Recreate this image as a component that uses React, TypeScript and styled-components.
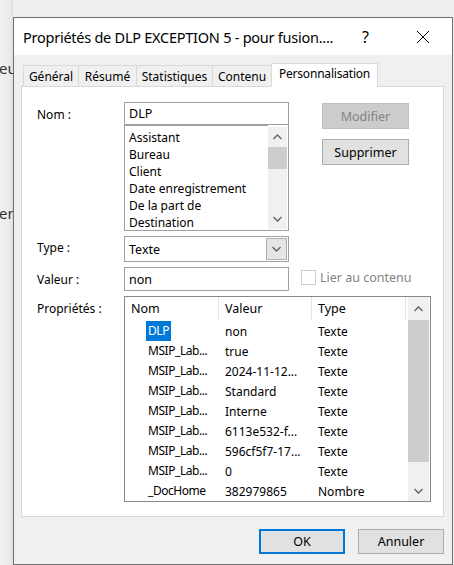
import styled, { createGlobalStyle } from 'styled-components'

const GlobalStyle = createGlobalStyle`
  html, body {
    margin: 0;
    padding: 0;
    background: #efefef;
    font-family: 'Noto Sans', 'Open Sans', sans-serif;
    font-size: 12px;
    color: #000;
  }
`

const nameItems = ['Assistant', 'Bureau', 'Client', 'Date enregistrement', 'De la part de', 'Destination']

const props = [
  { name: 'DLP', value: 'non', type: 'Texte', selected: true },
  { name: 'MSIP_Lab...', value: 'true', type: 'Texte' },
  { name: 'MSIP_Lab...', value: '2024-11-12...', type: 'Texte' },
  { name: 'MSIP_Lab...', value: 'Standard', type: 'Texte' },
  { name: 'MSIP_Lab...', value: 'Interne', type: 'Texte' },
  { name: 'MSIP_Lab...', value: '6113e532-f...', type: 'Texte' },
  { name: 'MSIP_Lab...', value: '596cf5f7-17...', type: 'Texte' },
  { name: 'MSIP_Lab...', value: '0', type: 'Texte' },
  { name: '_DocHome', value: '382979865', type: 'Nombre' },
]

const tabs = [
  { label: 'Général', width: 56 },
  { label: 'Résumé', width: 59 },
  { label: 'Statistiques', width: 77 },
  { label: 'Contenu', width: 60 },
  { label: 'Personnalisation', width: 107, active: true },
]

const Chevron = ({ up }: { up?: boolean }) => (
  <svg width="9" height="6" viewBox="0 0 9 6">
    <path
      d={up ? 'M0.5 5 L4.5 1 L8.5 5' : 'M0.5 1 L4.5 5 L8.5 1'}
      fill="none"
      stroke="#606060"
      strokeWidth="1.3"
    />
  </svg>
)

export default function App() {
  return (
    <>
      <GlobalStyle />
      <Desktop>
        <BackStrip>
          <BackText $top={59}>eu</BackText>
          <BackText $top={127}>en</BackText>
        </BackStrip>
        <Dialog>
          <TitleBar>
            <Title>Propriétés de DLP EXCEPTION 5 - pour fusion....</Title>
            <HelpGlyph>?</HelpGlyph>
            <CloseIcon width="14" height="14" viewBox="0 0 14 14">
              <path d="M1 1 L13 13 M13 1 L1 13" stroke="#000" strokeWidth="1" />
            </CloseIcon>
          </TitleBar>
          <Body>
            <TabRow>
              {tabs.map((t) => (
                <Tab key={t.label} $active={t.active} $w={t.width}>
                  {t.label}
                </Tab>
              ))}
            </TabRow>
            <Panel>
              <FormGrid>
                <Label $top={6}>Nom :</Label>
                <NameCol>
                  <TextInput>DLP</TextInput>
                  <NameList>
                    <NameItems>
                      {nameItems.map((n) => (
                        <NameItem key={n}>{n}</NameItem>
                      ))}
                    </NameItems>
                    <VScroll>
                      <ArrowBox $h={20}>
                        <Chevron up />
                      </ArrowBox>
                      <Thumb $h={22} />
                      <Spacer />
                      <ArrowBox $h={20}>
                        <Chevron />
                      </ArrowBox>
                    </VScroll>
                  </NameList>
                </NameCol>
                <ButtonCol>
                  <SideButton disabled>Modifier</SideButton>
                  <SideButton>Supprimer</SideButton>
                </ButtonCol>

                <Label $top={5}>Type :</Label>
                <Combo>
                  <span>Texte</span>
                  <ComboButton>
                    <Chevron />
                  </ComboButton>
                </Combo>
                <div />

                <Label $top={6}>Valeur :</Label>
                <ValueInput>non</ValueInput>
                <CheckRow>
                  <CheckBox />
                  <span>Lier au contenu</span>
                </CheckRow>

                <Label $top={6}>Propriétés :</Label>
                <ListView>
                  <ListMain>
                    <HeaderRow>
                      <HeaderCell>Nom</HeaderCell>
                      <HeaderCell>Valeur</HeaderCell>
                      <HeaderCell>Type</HeaderCell>
                    </HeaderRow>
                    {props.map((p, i) => (
                      <PropRow key={i}>
                        <NameCell>
                          <NameText $selected={p.selected}>{p.name}</NameText>
                        </NameCell>
                        <Cell>{p.value}</Cell>
                        <Cell>{p.type}</Cell>
                      </PropRow>
                    ))}
                  </ListMain>
                  <VScroll $wide>
                    <ArrowBox $h={23}>
                      <Chevron up />
                    </ArrowBox>
                    <Thumb $h={142} />
                    <Spacer />
                    <ArrowBox $h={20}>
                      <Chevron />
                    </ArrowBox>
                  </VScroll>
                </ListView>
              </FormGrid>
            </Panel>
            <Footer>
              <DialogButton $default>OK</DialogButton>
              <DialogButton>Annuler</DialogButton>
            </Footer>
          </Body>
        </Dialog>
      </Desktop>
    </>
  )
}

const Desktop = styled.div`
  display: flex;
  height: 565px;
  overflow: hidden;
  background: #efefef;
`

const BackStrip = styled.div`
  width: 13px;
  flex-shrink: 0;
  display: flex;
  flex-direction: column;
  overflow: hidden;
  font-size: 15px;
  color: #333;
  background: linear-gradient(to right, #f0f0f0 0%, #ebebeb 70%, #e0e0e0 100%);
`

const BackText = styled.span<{ $top: number }>`
  margin-top: ${(p) => p.$top}px;
  line-height: 18px;
  white-space: nowrap;
  margin-left: -1px;
`

const Dialog = styled.div`
  margin-top: 17px;
  width: 440px;
  height: 548px;
  box-sizing: border-box;
  border: 1px solid #707070;
  display: flex;
  flex-direction: column;
  background: #f0f0f0;
  flex-shrink: 0;
`

const TitleBar = styled.div`
  height: 37px;
  background: #fff;
  display: flex;
  align-items: center;
  padding-left: 9px;
  flex-shrink: 0;
`

const Title = styled.div`
  font-size: 14.5px;
  flex: 1;
  white-space: nowrap;
  letter-spacing: -0.25px;
`

const HelpGlyph = styled.span`
  font-size: 16px;
  width: 14px;
  margin-right: 40px;
`

const CloseIcon = styled.svg`
  margin-right: 22px;
`

const Body = styled.div`
  flex: 1;
  display: flex;
  flex-direction: column;
  padding: 8px 8px 0 7px;
`

const TabRow = styled.div`
  display: flex;
  align-items: flex-end;
  height: 23px;
  padding-left: 3px;
  position: relative;
  z-index: 1;
`

const Tab = styled.div<{ $active?: boolean; $w: number }>`
  width: ${(p) => p.$w}px;
  height: ${(p) => (p.$active ? 24 : 21)}px;
  box-sizing: border-box;
  display: flex;
  align-items: center;
  justify-content: center;
  background: ${(p) => (p.$active ? '#fff' : '#f0f0f0')};
  border: 1px solid #d9d9d9;
  border-bottom: ${(p) => (p.$active ? '1px solid #fff' : '0')};
  margin-left: -1px;
  margin-bottom: ${(p) => (p.$active ? -1 : 0)}px;
  padding-bottom: ${(p) => (p.$active ? 3 : 0)}px;
  white-space: nowrap;
  letter-spacing: ${(p) => (p.$active ? '-0.2px' : '0')};
`

const Panel = styled.div`
  height: 431px;
  box-sizing: border-box;
  background: #fff;
  border: 1px solid #d9d9d9;
  padding: 15px 0 0 15px;
`

const FormGrid = styled.div`
  display: grid;
  grid-template-columns: 87px 165px 1fr;
  row-gap: 5px;
  align-items: start;
`

const Label = styled.div<{ $top: number }>`
  padding-top: ${(p) => p.$top}px;
  line-height: 14px;
`

const NameCol = styled.div`
  display: flex;
  flex-direction: column;
`

const boxBorder = '#a0a0a0'

const TextInput = styled.div`
  height: 23px;
  box-sizing: border-box;
  border: 1px solid ${boxBorder};
  padding: 0 4px;
  display: flex;
  align-items: center;
  font-size: 12.5px;
`

const NameList = styled.div`
  height: 106px;
  box-sizing: border-box;
  border: 1px solid ${boxBorder};
  border-top: 0;
  display: flex;
  overflow: hidden;
`

const NameItems = styled.div`
  flex: 1;
  padding: 3px 0 0 4px;
  border-top: 1px solid ${boxBorder};
`

const NameItem = styled.div`
  line-height: 17px;
  white-space: nowrap;
`

const VScroll = styled.div<{ $wide?: boolean }>`
  width: ${(p) => (p.$wide ? 21 : 19)}px;
  flex-shrink: 0;
  background: #f0f0f0;
  display: flex;
  flex-direction: column;
  margin: ${(p) => (p.$wide ? '0 1px 0 0' : '2px 1px 1px 0')};
`

const ArrowBox = styled.div<{ $h: number }>`
  height: ${(p) => p.$h}px;
  display: flex;
  align-items: center;
  justify-content: center;
  flex-shrink: 0;
`

const Thumb = styled.div<{ $h: number }>`
  height: ${(p) => p.$h}px;
  background: #cdcdcd;
  flex-shrink: 0;
`

const Spacer = styled.div`
  flex: 1;
`

const ButtonCol = styled.div`
  display: flex;
  flex-direction: column;
  gap: 10px;
  padding-left: 33px;
  padding-top: 1px;
`

const SideButton = styled.div<{ disabled?: boolean }>`
  width: 87px;
  height: 26px;
  box-sizing: border-box;
  display: flex;
  align-items: center;
  justify-content: center;
  font-size: 12.5px;
  background: ${(p) => (p.disabled ? '#cccccc' : '#e1e1e1')};
  border: 1px solid ${(p) => (p.disabled ? '#bfbfbf' : '#adadad')};
  color: ${(p) => (p.disabled ? '#838383' : '#000')};
`

const Combo = styled.div`
  height: 26px;
  box-sizing: border-box;
  border: 1px solid ${boxBorder};
  display: flex;
  align-items: center;
  padding-left: 4px;
  font-size: 12.5px;

  span {
    flex: 1;
  }
`

const ComboButton = styled.div`
  width: 19px;
  height: 20px;
  margin-right: 1px;
  background: #e5e5e5;
  border: 1px solid #adadad;
  display: flex;
  align-items: center;
  justify-content: center;
`

const ValueInput = styled(TextInput)`
  height: 24px;
`

const CheckRow = styled.div`
  display: flex;
  align-items: center;
  gap: 4px;
  padding-left: 12px;
  padding-top: 2px;
  color: #838383;
  font-size: 12.5px;
`

const CheckBox = styled.div`
  width: 15px;
  height: 15px;
  box-sizing: border-box;
  border: 1px solid #cccccc;
  background: #fff;
`

const ListView = styled.div`
  grid-column: 2 / 4;
  width: 307px;
  height: 206px;
  box-sizing: border-box;
  border: 1px solid #828790;
  display: flex;
  overflow: hidden;
`

const ListMain = styled.div`
  flex: 1;
  display: flex;
  flex-direction: column;
`

const columns = '94px 93px 94px'

const HeaderRow = styled.div`
  display: grid;
  grid-template-columns: ${columns};
  height: 24px;
  align-items: center;
  margin-bottom: 1px;
`

const HeaderCell = styled.div`
  padding-left: 6px;
  height: 100%;
  display: flex;
  align-items: center;
  border-right: 1px solid #e5e5e5;
  font-size: 12.5px;
`

const PropRow = styled.div`
  display: grid;
  grid-template-columns: ${columns};
  height: 20px;
  align-items: center;
  font-size: 12px;
`

const NameCell = styled.div`
  padding-left: 21px;
  overflow: hidden;
`

const NameText = styled.span<{ $selected?: boolean }>`
  display: inline-block;
  line-height: 20px;
  padding: 0 2px;
  background: ${(p) => (p.$selected ? '#0078d7' : 'transparent')};
  color: ${(p) => (p.$selected ? '#fff' : '#000')};
  white-space: nowrap;
  letter-spacing: -0.45px;
`

const Cell = styled.div`
  padding-left: 6px;
  white-space: nowrap;
`

const Footer = styled.div`
  display: flex;
  justify-content: flex-end;
  gap: 13px;
  padding-top: 12px;
`

const DialogButton = styled.div<{ $default?: boolean }>`
  width: 86px;
  height: 25px;
  box-sizing: border-box;
  display: flex;
  align-items: center;
  justify-content: center;
  font-size: 12.5px;
  background: #e1e1e1;
  border: ${(p) => (p.$default ? '2px solid #0078d7' : '1px solid #adadad')};
`
